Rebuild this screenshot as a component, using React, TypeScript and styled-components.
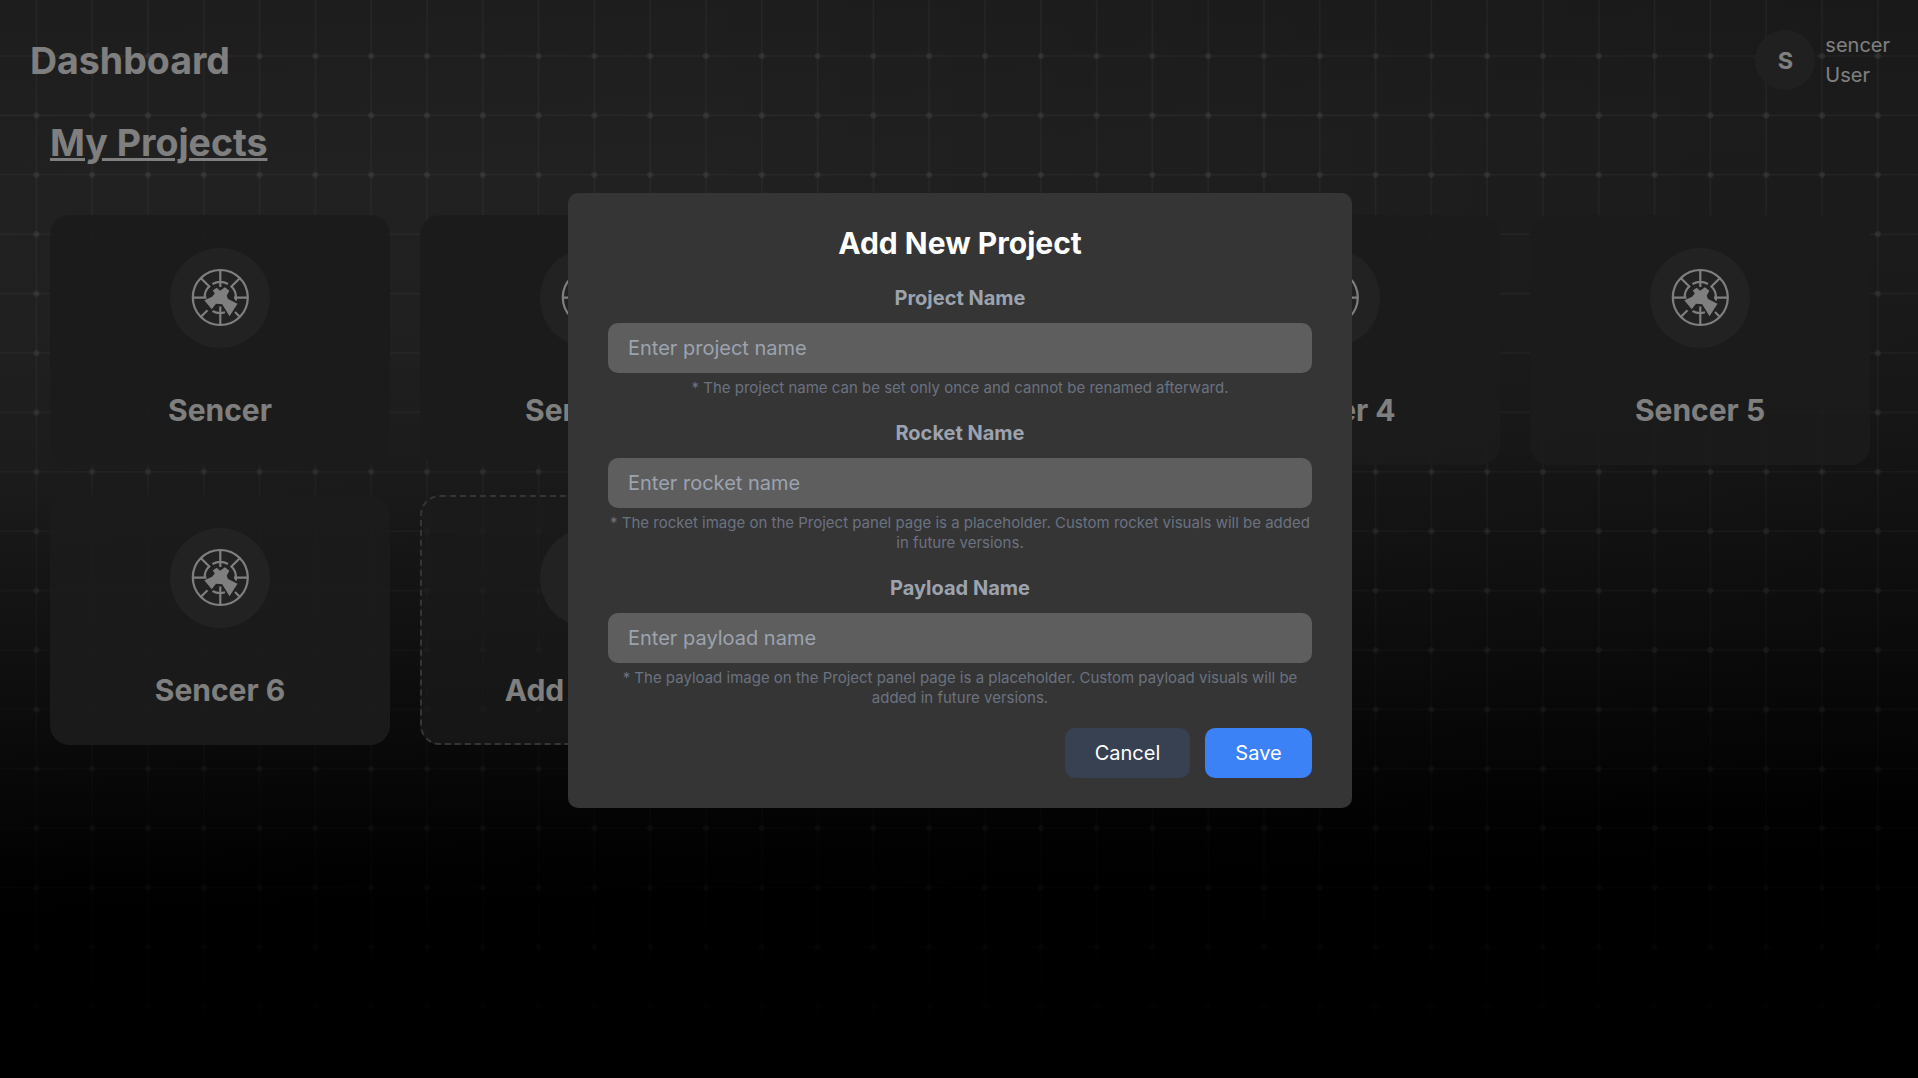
import React from "react";
import styled, { createGlobalStyle } from "styled-components";

const Global = createGlobalStyle`
  * { box-sizing: border-box; }
  body { margin: 0; background: #000; font-family: Inter, "Liberation Sans", sans-serif; color: #fff; overflow: hidden; }
  h1, h2, h3, p { margin: 0; }
`;

const Page = styled.div`
  position: relative;
  height: 1078px;
  overflow: hidden;
  background: linear-gradient(178deg, #3a3a3a 0%, #424242 16%, #414141 28%, #383838 41%, #202020 58%, #040404 76%, #000 82%);
`;

const Shade = styled.div`
  position: absolute;
  inset: 0;
  background: linear-gradient(90deg, transparent 35%, rgba(0, 0, 0, 0.18) 100%);
`;

const Grid = styled.svg`
  position: absolute;
  inset: 0;
`;

const Content = styled.main`
  position: relative;
  padding: 30px 28px 0 30px;
`;

const Header = styled.header`
  display: flex;
  justify-content: space-between;
  align-items: center;
  height: 60px;
`;

const PageTitle = styled.h1`
  font-size: 37.5px;
  line-height: 45px;
  font-weight: 700;
`;

const User = styled.div`
  display: flex;
  align-items: center;
  gap: 10px;
`;

const Avatar = styled.div`
  display: grid;
  place-items: center;
  width: 60px;
  height: 60px;
  border-radius: 50%;
  background: #404040;
  font-size: 23.5px;
  font-weight: 700;
`;

const UserText = styled.div`
  font-size: 20px;
  line-height: 30px;
`;

const Section = styled.section`
  padding: 30px 20px 0;
`;

const SectionTitle = styled.h2`
  font-size: 37.5px;
  line-height: 45px;
  font-weight: 700;
  text-decoration: underline;
  text-decoration-thickness: 3px;
`;

const Cards = styled.div`
  display: grid;
  grid-template-columns: repeat(5, 1fr);
  gap: 30px;
  margin-top: 50px;
`;

const Card = styled.article<{ $dashed?: boolean }>`
  height: 250px;
  padding-top: ${(p) => (p.$dashed ? 31 : 33)}px;
  display: flex;
  flex-direction: column;
  align-items: center;
  border-radius: 20px;
  background: ${(p) => (p.$dashed ? "rgba(54,54,54,.7)" : "rgba(54,54,54,.94)")};
  border: ${(p) => (p.$dashed ? "2px dashed #6b6b70" : "0")};
`;

const Disc = styled.div`
  display: grid;
  place-items: center;
  width: 100px;
  height: 100px;
  border-radius: 50%;
  background: #444;
`;

const CardTitle = styled.h3`
  margin-top: 42px;
  font-size: 30px;
  line-height: 40px;
  font-weight: 700;
`;

const Overlay = styled.div`
  position: absolute;
  inset: 0;
  display: flex;
  justify-content: center;
  align-items: flex-start;
  padding: 193px 0 0 2px;
  background: rgba(0, 0, 0, 0.5);
`;

const Dialog = styled.form`
  width: 784px;
  height: 615px;
  padding: 30px 40px;
  border-radius: 10px;
  background: #353535;
  text-align: center;
`;

const DialogTitle = styled.h2`
  font-size: 30px;
  line-height: 40px;
  font-weight: 700;
  margin-bottom: 20px;
`;

const Field = styled.div`
  margin-bottom: 20px;
`;

const Label = styled.label`
  display: block;
  color: #9ca3af;
  font-size: 20px;
  line-height: 30px;
  font-weight: 700;
  margin-bottom: 10px;
`;

const Input = styled.input`
  display: block;
  width: 100%;
  height: 50px;
  padding: 0 20px;
  border: 0;
  border-radius: 10px;
  background: #5e5e5e;
  font: 400 20px/30px Inter, "Liberation Sans", sans-serif;
  &::placeholder { color: #9ca3af; opacity: 1; }
`;

const Hint = styled.p`
  margin-top: 5px;
  color: #6b7280;
  font-size: 15px;
  line-height: 20px;
`;

const Actions = styled.div`
  display: flex;
  justify-content: flex-end;
  gap: 15px;
`;

const Button = styled.button<{ $primary?: boolean }>`
  width: ${(p) => (p.$primary ? 107 : 125)}px;
  height: 50px;
  padding: 0;
  border: 0;
  border-radius: 10px;
  color: #fff;
  background: ${(p) => (p.$primary ? "#3b82f6" : "#374151")};
  font: 400 20px/30px Inter, "Liberation Sans", sans-serif;
`;

const columns = Array.from({ length: 34 }, (_, i) => 36.4 + i * 55.8);
const rows = Array.from({ length: 18 }, (_, i) => 56 + i * 59.4);

function Backdrop() {
  return (
    <Grid width="1918" height="1078">
      <defs>
        <linearGradient id="fade" x1="0" y1="0" x2="0" y2="1">
          <stop offset="0" stopColor="#fff" />
          <stop offset=".35" stopColor="#fff" stopOpacity=".9" />
          <stop offset=".75" stopColor="#fff" stopOpacity=".36" />
          <stop offset="1" stopColor="#fff" stopOpacity="0" />
        </linearGradient>
        <mask id="gridMask"><rect width="1918" height="1078" fill="url(#fade)" /></mask>
      </defs>
      <g mask="url(#gridMask)">
        <g stroke="#fff" strokeOpacity=".085" strokeWidth="1.6">
          {columns.map((x) => <path key={x} d={`M${x} 0V1078`} />)}
          {rows.map((y) => <path key={y} d={`M0 ${y}H1918`} />)}
        </g>
        <g fill="#fff" fillOpacity=".16">
          {rows.map((y) => columns.map((x) => <circle key={`${x}-${y}`} cx={x} cy={y} r="3.1" />))}
        </g>
      </g>
    </Grid>
  );
}

function Emblem() {
  return (
    <svg width="60" height="60" viewBox="0 0 60 60" fill="none" stroke="#fff" strokeWidth="2.2">
      <circle cx="30.3" cy="29.5" r="27.5" />
      <path d="M30.3 2V19M3 29.7H16.5M44 29.7H58M30.3 57V38.5M11 10.2L20 19.2M49.7 10.2L40.7 19.2M11 48.8L17.5 42.3M49.7 48.8L45 44" />
      <path d="M14.6 29.5A15.7 15.7 0 0 1 19.6 18M22.5 16A15.7 15.7 0 0 1 38 16M41 18A15.7 15.7 0 0 1 46 29.5V32.5M22.5 43A15.7 15.7 0 0 0 35 44.3" />
      <path fill="#fff" stroke="none" d="M22.7 22.5L26.7 19.8L30 22.8L35 19.2L39.3 22.8L36.7 27.8L38 31L47.5 35.7L39.5 48.2L32.2 36.3L26 35.8L21.7 41.2L14.3 32.2L22 28.8L24.8 25.5Z" />
    </svg>
  );
}

const projects = ["Sencer", "Sencer 2", "Sencer 3", "Sencer 4", "Sencer 5", "Sencer 6"];

const fields = [
  { name: "project", label: "Project Name", hint: "* The project name can be set only once and cannot be renamed afterward." },
  { name: "rocket", label: "Rocket Name", hint: "* The rocket image on the Project panel page is a placeholder. Custom rocket visuals will be added in future versions." },
  { name: "payload", label: "Payload Name", hint: "* The payload image on the Project panel page is a placeholder. Custom payload visuals will be added in future versions." },
];

export default function App() {
  return (
    <Page>
      <Global />
      <Shade />
      <Backdrop />
      <Content>
        <Header>
          <PageTitle>Dashboard</PageTitle>
          <User>
            <Avatar>S</Avatar>
            <UserText>sencer<br />User</UserText>
          </User>
        </Header>
        <Section>
          <SectionTitle>My Projects</SectionTitle>
          <Cards>
            {projects.map((name) => (
              <Card key={name}>
                <Disc><Emblem /></Disc>
                <CardTitle>{name}</CardTitle>
              </Card>
            ))}
            <Card $dashed>
              <Disc />
              <CardTitle>Add Project</CardTitle>
            </Card>
          </Cards>
        </Section>
      </Content>
      <Overlay>
        <Dialog>
          <DialogTitle>Add New Project</DialogTitle>
          {fields.map((f) => (
            <Field key={f.name}>
              <Label htmlFor={f.name}>{f.label}</Label>
              <Input id={f.name} placeholder={`Enter ${f.name} name`} />
              <Hint>{f.hint}</Hint>
            </Field>
          ))}
          <Actions>
            <Button type="button">Cancel</Button>
            <Button type="button" $primary>Save</Button>
          </Actions>
        </Dialog>
      </Overlay>
    </Page>
  );
}
